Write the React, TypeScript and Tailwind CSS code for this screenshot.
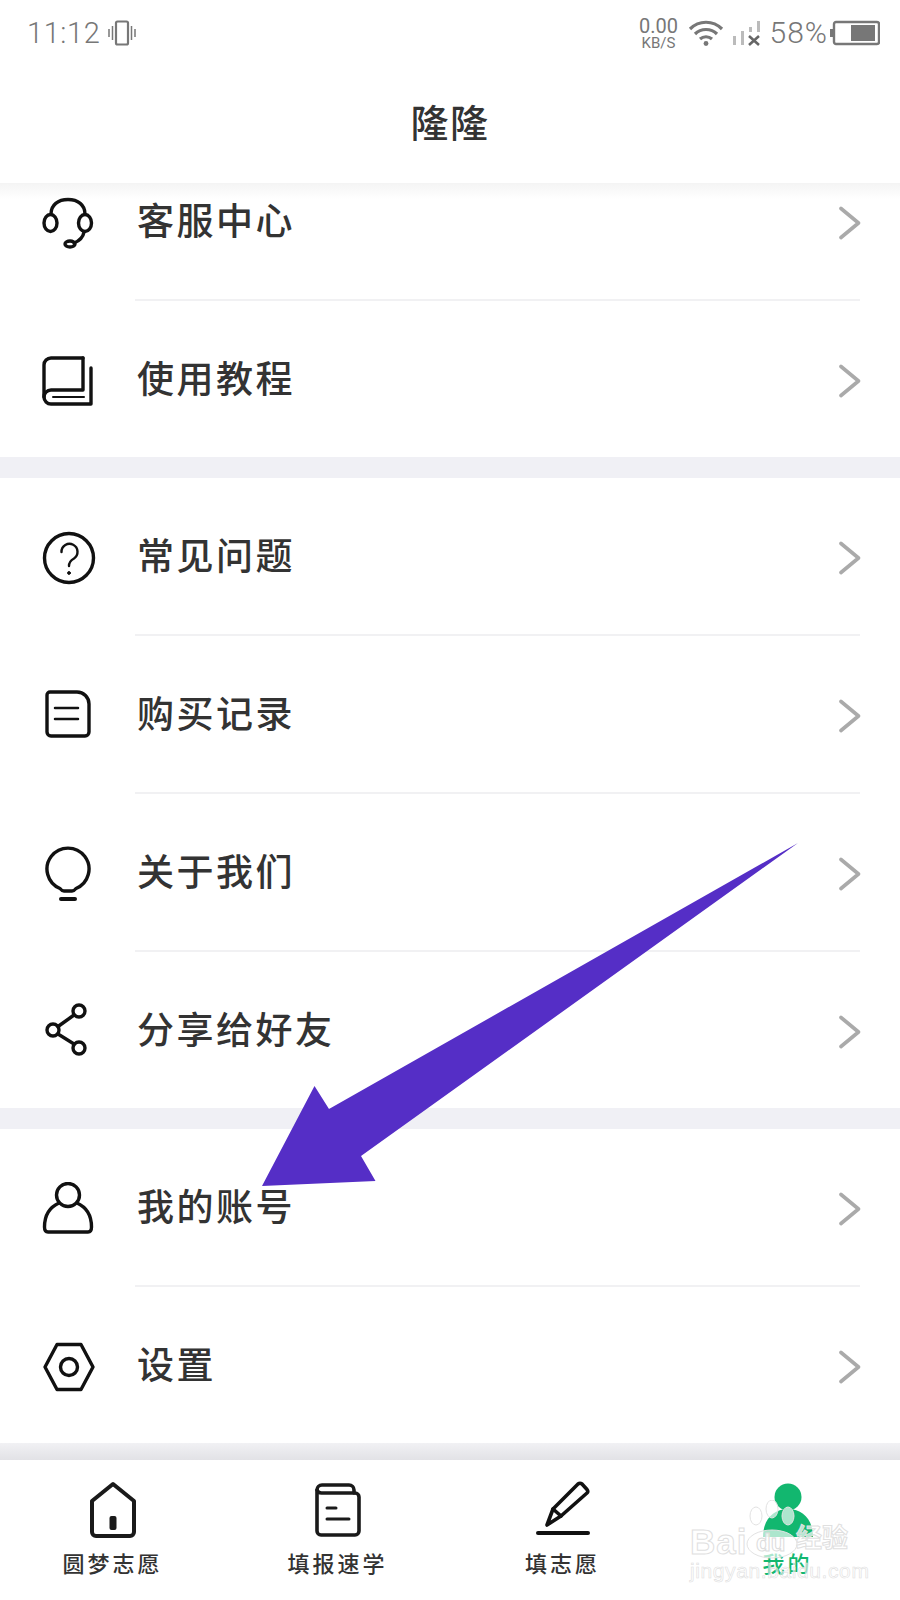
import React from "react";

const cjk = "font-['Liberation_Serif','Noto_Sans_CJK_SC',serif]";

function Chevron() {
  return (
    <svg width="22" height="34" viewBox="0 0 22 34" fill="none" className="shrink-0">
      <path d="M2 2.5 L19.5 17 L2 31.5" stroke="#aaaaaa" strokeWidth="3.6" strokeLinecap="round" strokeLinejoin="round" />
    </svg>
  );
}

function Ico({ w, h, className, children }: { w: number; h: number; className?: string; children: React.ReactNode }) {
  return (
    <svg
      width={w}
      height={h}
      viewBox={`0 0 ${w} ${h}`}
      fill="none"
      stroke="#111111"
      strokeWidth="3.4"
      strokeLinecap="round"
      strokeLinejoin="round"
      className={className}
    >
      {children}
    </svg>
  );
}

const icons: Record<string, React.ReactNode> = {
  headset: (
    <Ico w={52} h={52}>
      <path d="M9 17 C9 8 16 2.5 26 2.5 C36 2.5 43 8 43 17" />
      <ellipse cx="8.5" cy="26" rx="6.5" ry="8.5" />
      <ellipse cx="43" cy="26" rx="6.5" ry="8.5" />
      <path d="M42 35 C41 41 37 44 32 46" />
      <ellipse cx="28" cy="47" rx="5" ry="3" />
    </Ico>
  ),
  book: (
    <Ico w={52} h={50}>
      <path d="M41 2 H9 a7 7 0 0 0 -7 7 V41 a7 7 0 0 0 7 7 H49 V12" />
      <path d="M41 2 V34 H9 a7 7 0 0 0 -7 7" />
      <path d="M11 41 H42" strokeWidth="2" />
    </Ico>
  ),
  question: (
    <Ico w={54} h={54}>
      <circle cx="27" cy="27" r="24.5" />
      <path d="M19.5 21 a8 8 0 1 1 12.5 6.5 C28.5 29.5 27 31 27 35" strokeWidth="2.4" />
      <circle cx="27" cy="42" r="1.4" fill="#111111" strokeWidth="1" />
    </Ico>
  ),
  receipt: (
    <Ico w={46} h={48} className="ml-[3px] mt-[-4px]">
      <path d="M5 2 H32 a12 12 0 0 1 12 12 V42 a4 4 0 0 1 -4 4 H6 a4 4 0 0 1 -4 -4 V5 a3 3 0 0 1 3 -3 Z" />
      <path d="M10 18 H33 M10 29 H33" strokeWidth="2.5" />
    </Ico>
  ),
  bulb: (
    <Ico w={46} h={58} className="ml-[3px]">
      <path d="M15 43.5 A21 21 0 1 1 31 43.5 Q29 46 27 46 H19 Q17 46 15 43.5 Z" />
      <path d="M16 54 H30" strokeWidth="4" />
    </Ico>
  ),
  share: (
    <Ico w={44} h={58} className="ml-[2px] mt-[-4px]">
      <circle cx="35" cy="10" r="6" />
      <circle cx="9" cy="29" r="6" />
      <circle cx="35" cy="47" r="6" />
      <path d="M30 14 L14 25.5 M14 33 L30 43" />
    </Ico>
  ),
  person: (
    <Ico w={52} h={54}>
      <circle cx="26" cy="13" r="11.5" />
      <path d="M17 21 C8 25 2.5 33 2.5 45 Q2.5 50 6 50 H46 Q49.5 50 49.5 45 C49.5 33 44 25 35 21" />
    </Ico>
  ),
  nut: (
    <Ico w={54} h={50}>
      <path d="M3 25 L15 2.5 H39 L51 25 L39 47.5 H15 Z" />
      <circle cx="27" cy="25" r="8.5" />
    </Ico>
  ),
};

function Row({ icon, label }: { icon: string; label: string }) {
  return (
    <div className="flex h-[156px] items-center pl-[42px] pt-[3px]">
      <div className="flex w-[95px] shrink-0 items-center">{icons[icon]}</div>
      <div className="flex h-full flex-1 items-center justify-between pr-[39px]">
        <span className={`${cjk} text-[37px] font-medium leading-none tracking-[2.5px] text-[#333333]`}>{label}</span>
        <Chevron />
      </div>
    </div>
  );
}

function Divider() {
  return <div className="ml-[135px] mr-[40px] h-[2px] bg-[#f1f1f3]" />;
}

function Band() {
  return <div className="h-[21px] bg-[#f0f0f5]" />;
}

function Tab({ label, active, children }: { label: string; active?: boolean; children: React.ReactNode }) {
  return (
    <div className="flex flex-col items-center">
      <div className="flex h-[60px] items-center">{children}</div>
      <span
        className={`${cjk} mt-[13px] text-[22px] font-medium leading-[24px] tracking-[3px] ${active ? "text-[#12b76f]" : "text-[#333333]"}`}
      >
        {label}
      </span>
    </div>
  );
}

export default function App() {
  return (
    <div className="relative flex h-[1600px] w-[900px] flex-col overflow-hidden bg-white">
      {/* status bar */}
      <div className="flex h-[66px] items-center justify-between pl-[27px] pr-[20px] font-['Roboto',sans-serif] text-[#777777]">
        <div className="flex items-center gap-[8px]">
          <span className="text-[29px] font-light leading-none tracking-[0.6px]">11:12</span>
          <svg width="28" height="26" viewBox="0 0 28 26" fill="none" stroke="#777777">
            <rect x="8" y="1.5" width="12" height="23" rx="1.5" strokeWidth="2.2" />
            <path d="M4.5 6 V20 M23.5 6 V20" strokeWidth="1.5" />
            <path d="M1 9 V17 M27 9 V17" strokeWidth="1.5" />
          </svg>
        </div>
        <div className="flex items-center">
          <div className="flex w-[40px] flex-col items-center leading-none">
            <span className="text-[20px] leading-[19px]">0.00</span>
            <span className="text-[15px] leading-[14px]">KB/S</span>
          </div>
          <svg width="36" height="26" viewBox="0 0 36 26" fill="none" stroke="#777777" strokeWidth="3.2" className="ml-[9px]">
            <path d="M2 9 C11 0 25 0 34 9" />
            <path d="M7 14 C13 8 23 8 29 14" />
            <path d="M12 19 C15.5 16 20.5 16 24 19" />
            <circle cx="18" cy="23.5" r="2.4" fill="#777777" stroke="none" />
          </svg>
          <svg width="30" height="26" viewBox="0 0 30 26" className="ml-[8px]">
            <rect x="1" y="16" width="3" height="9" fill="#bbbbbb" />
            <rect x="9" y="11" width="3" height="14" fill="#bbbbbb" />
            <rect x="17" y="7" width="3" height="5" fill="#bbbbbb" />
            <rect x="25" y="1" width="3" height="11" fill="#bbbbbb" />
            <path d="M17 16 L27 25 M27 16 L17 25" stroke="#666666" strokeWidth="2.6" />
          </svg>
          <span className="ml-[8px] text-[30px] font-light leading-none tracking-[1px]">58%</span>
          <svg width="50" height="26" viewBox="0 0 50 26" fill="none" className="ml-[2px]">
            <rect x="0" y="9" width="3" height="8" fill="#777777" />
            <rect x="4" y="2" width="45" height="22" rx="2" stroke="#777777" strokeWidth="2.4" />
            <rect x="21" y="5" width="24" height="16" fill="#777777" />
          </svg>
        </div>
      </div>

      {/* title */}
      <div className="relative z-10 flex h-[117px] items-center justify-center bg-white pb-[2px]">
        <span className={`${cjk} text-[38px] font-medium leading-none tracking-[1.5px] text-[#333333]`}>隆隆</span>
      </div>

      {/* scrolled list, first row sits partly under the title */}
      <div className="relative min-h-0 flex-1 overflow-hidden">
        <div className="absolute inset-x-0 top-0 z-10 h-[16px] bg-gradient-to-b from-[#f4f4f4] to-white/0" />
        <div className="mt-[-40px]">
          <Row icon="headset" label="客服中心" />
          <Divider />
          <Row icon="book" label="使用教程" />
          <Band />
          <Row icon="question" label="常见问题" />
          <Divider />
          <Row icon="receipt" label="购买记录" />
          <Divider />
          <Row icon="bulb" label="关于我们" />
          <Divider />
          <Row icon="share" label="分享给好友" />
          <Band />
          <Row icon="person" label="我的账号" />
          <Divider />
          <Row icon="nut" label="设置" />
        </div>
      </div>

      {/* tab bar */}
      <div className="h-[157px] shrink-0">
        <div className="h-[17px] bg-gradient-to-b from-[#f1f1f4] to-[#e2e2e6]" />
        <div className="grid h-[140px] grid-cols-4 bg-white pt-[20px]">
          <Tab label="圆梦志愿">
            <svg width="50" height="58" viewBox="0 0 50 58" fill="none" stroke="#1a1a1a" strokeWidth="4" strokeLinejoin="round">
              <path d="M25 3 L46 20 V51 a4 4 0 0 1 -4 4 H8 a4 4 0 0 1 -4 -4 V20 Z" />
              <rect x="21.5" y="35" width="7" height="14" rx="2" fill="#1a1a1a" stroke="none" />
            </svg>
          </Tab>
          <Tab label="填报速学">
            <svg width="50" height="58" viewBox="0 0 50 58" fill="none" stroke="#1a1a1a" strokeWidth="3.6" strokeLinecap="round" strokeLinejoin="round">
              <path d="M4 9 a5 5 0 0 1 5 -5 H36 a5 5 0 0 1 5 5 V12" />
              <path d="M4 9 V50 a4 4 0 0 0 4 4 H42 a4 4 0 0 0 4 -4 V16 a4 4 0 0 0 -4 -4 H9 a5 5 0 0 1 -5 -3 Z" />
              <path d="M14 27 H23 M14 38 H36" strokeWidth="3" />
            </svg>
          </Tab>
          <Tab label="填志愿">
            <svg width="58" height="58" viewBox="0 0 58 58" fill="none" stroke="#111111" strokeWidth="3.6" strokeLinecap="round" strokeLinejoin="round">
              <path d="M13 44 L19 28 L44 3 Q46 1.5 48 3 L53 8.5 Q54.5 10.5 53 12 L27 35 Z" />
              <path d="M19 28 L27 35" />
              <path d="M4 52 H54" strokeWidth="4" />
            </svg>
          </Tab>
          <Tab label="我的" active>
            <svg width="52" height="58" viewBox="0 0 52 58" fill="#12b76f">
              <circle cx="26" cy="16" r="13.5" />
              <path d="M1 56 C1 40 10 28 26 28 C42 28 51 40 51 56 Z" />
            </svg>
          </Tab>
        </div>
      </div>

      {/* baidu watermark */}
      <div className="absolute left-[688px] top-[1500px] h-[84px] w-[166px] font-['Liberation_Sans',sans-serif]">
        <svg width="166" height="60" viewBox="0 0 166 60" className="absolute left-0 top-0" fill="#ffffff" fillOpacity="0.65" stroke="#e2e2e2" strokeWidth="1">
          <ellipse cx="84" cy="44" rx="25" ry="14" />
          <ellipse cx="68" cy="16" rx="6" ry="9" />
          <ellipse cx="84" cy="9" rx="6" ry="9" />
          <ellipse cx="100" cy="16" rx="6" ry="9" />
        </svg>
        <span className="absolute left-[2px] top-[24px] text-[35px] font-bold leading-none tracking-[1px] text-white/70 [-webkit-text-stroke:1px_#e0e0e0]">
          Bai
        </span>
        <span className="absolute left-[68px] top-[31px] text-[24px] font-bold leading-none text-white/70 [-webkit-text-stroke:1px_#dcdcdc]">
          du
        </span>
        <span className={`${cjk} absolute left-[108px] top-[26px] text-[26px] font-bold leading-none text-white/70 [-webkit-text-stroke:1px_#e0e0e0]`}>
          经验
        </span>
        <span className="absolute left-[2px] top-[60px] text-[21px] leading-none tracking-[0.6px] text-white/50 [-webkit-text-stroke:0.6px_#e0e0e0]">
          jingyan.baidu.com
        </span>
      </div>

      {/* annotation arrow */}
      <svg width="900" height="1600" viewBox="0 0 900 1600" className="pointer-events-none absolute left-0 top-0">
        <path d="M798 843 L329 1109 L314.5 1086 L262 1186 L375.5 1181 L361 1156 Z" fill="#552ec6" />
      </svg>
    </div>
  );
}
